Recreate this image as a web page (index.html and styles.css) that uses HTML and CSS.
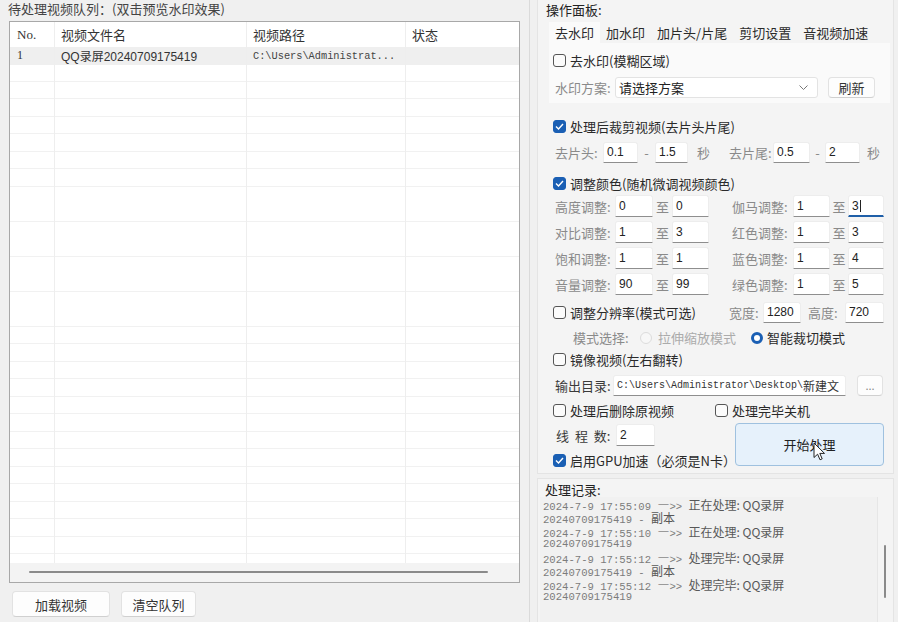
FILE: index.html
```html
<!doctype html>
<html lang="zh-CN">
<head>
    <meta charset="UTF-8">
    <meta name="viewport" content="width=device-width, initial-scale=1.0">
    <title>视频批量处理</title>
    <link rel="stylesheet" href="styles.css">
</head>
<body>
<div class="app">
    <!-- 左侧：待处理队列 -->
    <section class="queue">
        <div class="queue-title">待处理视频队列：(双击预览水印效果)</div>
        <div class="grid-box">
            <div class="grid">
                <div class="col col-no">
                    <div class="th">No.</div>
                    <div class="td sel">1</div>
                </div>
                <div class="col col-name">
                    <div class="th">视频文件名</div>
                    <div class="td sel">QQ录屏20240709175419</div>
                </div>
                <div class="col col-path">
                    <div class="th">视频路径</div>
                    <div class="td sel mono">C:\Users\Administrat...</div>
                </div>
                <div class="col col-state">
                    <div class="th">状态</div>
                    <div class="td sel"></div>
                </div>
            </div>
            <div class="hscroll"><div class="hthumb"></div></div>
        </div>
        <div class="queue-actions">
            <button class="btn btn-load">加载视频</button>
            <button class="btn btn-clear">清空队列</button>
        </div>
    </section>

    <!-- 右侧：操作面板 + 处理记录 -->
    <section class="side">
        <div class="ops">
            <div class="ops-title">操作面板:</div>
            <div class="tabs">
                <div class="tab active">去水印</div>
                <div class="tab">加水印</div>
                <div class="tab">加片头/片尾</div>
                <div class="tab">剪切设置</div>
                <div class="tab">音视频加速</div>
            </div>
            <div class="tabpage">
                <label class="check"><span class="box"></span>去水印(模糊区域)</label>
                <div class="scheme-row">
                    <span class="lbl scheme-lbl">水印方案:</span>
                    <div class="select">
                        <span>请选择方案</span>
                        <svg class="chevron" width="9" height="5" viewBox="0 0 9 5"><polyline points="0.5,0.5 4.5,4.5 8.5,0.5" fill="none" stroke="#777" stroke-width="1"/></svg>
                    </div>
                    <button class="btn btn-refresh">刷新</button>
                </div>
            </div>

            <div class="form">
                <label class="check row row-crop-cb"><span class="box on"><svg width="9" height="7" viewBox="0 0 9 7"><polyline points="1,3.5 3.5,6 8,1" fill="none" stroke="#fff" stroke-width="1.4"/></svg></span>处理后裁剪视频(去片头片尾)</label>

                <div class="row crop-row">
                    <span class="lbl">去片头:</span>
                    <span class="field">0.1</span>
                    <span class="lbl dash">-</span>
                    <span class="field">1.5</span>
                    <span class="lbl sec">秒</span>
                    <span class="lbl">去片尾:</span>
                    <span class="field">0.5</span>
                    <span class="lbl dash">-</span>
                    <span class="field">2</span>
                    <span class="lbl sec2">秒</span>
                </div>

                <label class="check row row-color-cb"><span class="box on"><svg width="9" height="7" viewBox="0 0 9 7"><polyline points="1,3.5 3.5,6 8,1" fill="none" stroke="#fff" stroke-width="1.4"/></svg></span>调整颜色(随机微调视频颜色)</label>

                <div class="row color-row first">
                    <span class="lbl">高度调整:</span><span class="field">0</span><span class="lbl to">至</span><span class="field">0</span><span></span>
                    <span class="lbl">伽马调整:</span><span class="field">1</span><span class="lbl to">至</span><span class="field focus">3<i class="caret"></i></span>
                </div>
                <div class="row color-row">
                    <span class="lbl">对比调整:</span><span class="field">1</span><span class="lbl to">至</span><span class="field">3</span><span></span>
                    <span class="lbl">红色调整:</span><span class="field">1</span><span class="lbl to">至</span><span class="field">3</span>
                </div>
                <div class="row color-row">
                    <span class="lbl">饱和调整:</span><span class="field">1</span><span class="lbl to">至</span><span class="field">1</span><span></span>
                    <span class="lbl">蓝色调整:</span><span class="field">1</span><span class="lbl to">至</span><span class="field">4</span>
                </div>
                <div class="row color-row">
                    <span class="lbl">音量调整:</span><span class="field">90</span><span class="lbl to">至</span><span class="field">99</span><span></span>
                    <span class="lbl">绿色调整:</span><span class="field">1</span><span class="lbl to">至</span><span class="field">5</span>
                </div>

                <div class="row res-row">
                    <label class="check"><span class="box"></span>调整分辨率(模式可选)</label>
                    <span class="lbl">宽度:</span><span class="field">1280</span><span></span>
                    <span class="lbl">高度:</span><span class="field">720</span>
                </div>

                <div class="row mode-row">
                    <span class="lbl">模式选择:</span>
                    <span class="radio off"></span><span class="lbl disabled">拉伸缩放模式</span>
                    <span class="radio on"></span><span class="radio-text">智能裁切模式</span>
                </div>

                <label class="check row row-mirror"><span class="box"></span>镜像视频(左右翻转)</label>

                <div class="row out-row">
                    <span class="lbl dark out-lbl">输出目录:</span>
                    <span class="field path"><span class="mono">C:\Users\Administrator\Desktop\</span>新建文</span>
                    <button class="btn btn-browse">...</button>
                </div>

                <div class="row del-row">
                    <label class="check"><span class="box"></span>处理后删除原视频</label>
                    <label class="check"><span class="box"></span>处理完毕关机</label>
                </div>

                <div class="run-block">
                    <div class="run-left">
                        <div class="row threads-row">
                            <span class="lbl dark threads-lbl">线&nbsp;程&nbsp;数:</span>
                            <span class="field">2</span>
                        </div>
                        <label class="check row row-gpu"><span class="box on"><svg width="9" height="7" viewBox="0 0 9 7"><polyline points="1,3.5 3.5,6 8,1" fill="none" stroke="#fff" stroke-width="1.4"/></svg></span>启用GPU加速（必须是N卡）</label>
                    </div>
                    <button class="btn btn-start">开始处理
                        <svg class="cursor" width="13" height="20" viewBox="0 0 13 20"><path d="M1 1 L1 15.5 L4.6 12.2 L7 17.8 L9.2 16.8 L6.8 11.4 L11.5 11.4 Z" fill="#fff" stroke="#222" stroke-width="1"/></svg>
                    </button>
                </div>
            </div>
        </div>

        <div class="log">
            <div class="log-title">处理记录:</div>
            <div class="log-box">
                <div class="log-lines">
                    <div class="log-line">2024-7-9 17:55:09 <span class="cn">—</span>&gt;&gt; <span class="cn">正在处理: QQ录屏</span></div>
                    <div class="log-line">20240709175419 - <span class="cn">副本</span></div>
                    <div class="log-line">2024-7-9 17:55:10 <span class="cn">—</span>&gt;&gt; <span class="cn">正在处理: QQ录屏</span></div>
                    <div class="log-line">20240709175419</div>
                    <div class="log-line">2024-7-9 17:55:12 <span class="cn">—</span>&gt;&gt; <span class="cn">处理完毕: QQ录屏</span></div>
                    <div class="log-line">20240709175419 - <span class="cn">副本</span></div>
                    <div class="log-line">2024-7-9 17:55:12 <span class="cn">—</span>&gt;&gt; <span class="cn">处理完毕: QQ录屏</span></div>
                    <div class="log-line">20240709175419</div>
                </div>
                <div class="log-track"><div class="vthumb"></div></div>
            </div>
        </div>
    </section>
</div>
</body>
</html>
```

FILE: styles.css
```css
body {
    margin: 0;
    background-color: #f0f0f0;
    font: 13px/1 "Noto Sans CJK SC", "Liberation Sans", sans-serif;
    color: #333;
    overflow: hidden;
}

.app {
    display: flex;
    width: 898px;
    height: 622px;
}

.mono {
    font-family: "Liberation Mono", "Noto Sans CJK SC", monospace;
}

/* ---------- 队列 ---------- */

.queue {
    width: 530px;
    flex: none;
    box-sizing: border-box;
    border-right: 1px solid #dadada;
}

.queue-title {
    height: 21px;
    box-sizing: border-box;
    padding: 2px 0 0 8px;
    line-height: 14px;
    color: #444;
}

.grid-box {
    margin-left: 9px;
    width: 511px;
    height: 562px;
    box-sizing: border-box;
    border: 1px solid #a8a8a8;
    background-color: #fff;
    display: flex;
    flex-direction: column;
}

.grid {
    flex: 1;
    display: flex;
    overflow: hidden;
}

.col {
    box-sizing: border-box;
    border-right: 1px solid #eeeeee;
    background-image: repeating-linear-gradient(to bottom, #fff 0, #fff 16.5px, #f1f1f1 16.5px, #f1f1f1 17.5px);
    background-position: 0 25px;
}

.col-no { width: 45px; }
.col-name { width: 192px; }
.col-path { width: 159px; }
.col-state { flex: 1; border-right: none; }

.th {
    height: 25px;
    padding-left: 6px;
    display: flex;
    align-items: center;
    background-color: #fff;
    color: #333;
}

.td {
    height: 17.5px;
    padding-left: 6px;
    display: flex;
    align-items: center;
    font: 12px "Liberation Sans", "Noto Sans CJK SC", sans-serif;
    color: #333;
}

.td.mono {
    font: 10.3px "Liberation Mono", monospace;
    color: #444;
}

.col-no .th,
.col-no .td {
    padding-left: 7px;
    font-family: "Liberation Serif", serif;
}

.td.sel {
    background-color: #efefef;
}

.hscroll {
    height: 19px;
    background-color: #f3f3f3;
    overflow: hidden;
}

.hthumb {
    margin: 8px 0 0 19px;
    width: 459px;
    height: 2px;
    border-radius: 1px;
    background-color: #8a8a8a;
}

.queue-actions {
    display: flex;
    gap: 11px;
    padding: 8px 0 0 12px;
}

.btn {
    height: 26px;
    padding: 0;
    border: 1px solid #e2e2e2;
    border-bottom-color: #d0d0d0;
    border-radius: 4px;
    background-color: #fdfdfd;
    font: 13px "Noto Sans CJK SC", sans-serif;
    color: #333;
}

.btn-load { width: 98px; }
.btn-clear { width: 75px; }

/* ---------- 操作面板 ---------- */

.side {
    flex: 1;
    display: flex;
    flex-direction: column;
    gap: 4px;
    padding: 0 5px 0 7px;
}

.ops {
    height: 474px;
    flex: none;
    box-sizing: border-box;
    background-color: #f4f4f4;
    border: 1px solid #e4e4e4;
    border-top: none;
}

.ops-title {
    height: 18px;
    box-sizing: border-box;
    padding: 3px 0 0 8px;
    line-height: 13px;
    color: #222;
}

.tabs {
    display: flex;
    height: 21px;
    margin: 4px 0 0 11px;
}

.tab {
    padding: 0 6px;
    line-height: 21px;
    color: #2a2a2a;
}

.tab.active {
    background-color: #fafafa;
}

.tabpage {
    margin-left: 11px;
    width: 341px;
    height: 60px;
    box-sizing: border-box;
    padding: 6px 0 0 4px;
    background-color: #fafafa;
    display: flex;
    flex-direction: column;
    gap: 5px;
}

.tabpage .check {
    height: 22px;
}

.check {
    display: flex;
    align-items: center;
    gap: 4px;
    color: #2a2a2a;
}

.box {
    width: 13px;
    height: 13px;
    flex: none;
    box-sizing: border-box;
    border: 1px solid #555;
    border-radius: 3px;
    background-color: #fbfbfb;
    display: flex;
    align-items: center;
    justify-content: center;
}

.box.on {
    background-color: #1a5fb4;
    border-color: #1a5fb4;
}

.lbl {
    color: #8a8a8a;
    white-space: nowrap;
}

.lbl.dark {
    color: #3a3a3a;
}

.scheme-row {
    display: flex;
    align-items: center;
    height: 22px;
    padding-left: 2px;
}

.scheme-lbl {
    width: 60px;
}

.select {
    width: 203px;
    height: 21px;
    box-sizing: border-box;
    border: 1px solid #e3e3e3;
    border-radius: 3px;
    background-color: #fff;
    display: flex;
    align-items: center;
    justify-content: space-between;
    padding: 0 9px 0 3px;
    color: #222;
}

.btn-refresh {
    width: 47px;
    height: 21px;
    margin-left: 10px;
}

.form {
    padding-left: 15px;
    display: flex;
    flex-direction: column;
}

.row {
    height: 22px;
    margin-top: 4px;
    flex: none;
}

.row-crop-cb { margin-top: 12px; }
.row-color-cb { margin-top: 9px; }
.color-row.first { margin-top: 1px; }
.res-row { margin-top: 6px; }
.mode-row { height: 21px; }
.row-mirror { margin-top: 0; }
.del-row,
.run-block { margin-top: 3px; }

.field {
    height: 21px;
    box-sizing: border-box;
    padding-left: 3px;
    border: 1px solid #ededed;
    border-bottom-color: #8e8e8e;
    border-radius: 3px 3px 0 0;
    background-color: #fff;
    display: flex;
    align-items: center;
    font: 12px "Liberation Sans", "Noto Sans CJK SC", sans-serif;
    color: #222;
    white-space: nowrap;
    overflow: hidden;
}

.field.focus {
    border-bottom: 2px solid #1f5fa8;
}

.caret {
    width: 1px;
    height: 12px;
    margin-left: 1px;
    background-color: #222;
}

.crop-row {
    display: grid;
    grid-template-columns: 48px 35px 17px 33px 41px 44px 37px 15px 35px auto;
    align-items: center;
    padding-left: 2px;
}

.crop-row .dash {
    text-align: center;
}

.crop-row .sec {
    padding-left: 9px;
}

.crop-row .sec2 {
    padding-left: 7px;
}

.color-row {
    display: grid;
    grid-template-columns: 60px 38px 19px 37px 23px 61px 37px 18px 36px;
    align-items: center;
    padding-left: 2px;
}

.color-row .field {
    height: 22px;
}

.color-row .to {
    text-align: center;
}

.res-row {
    display: grid;
    grid-template-columns: 176px 34px 38px 7px 37px 39px;
    align-items: center;
}

.mode-row {
    display: flex;
    align-items: center;
    padding-left: 20px;
}

.mode-row > .lbl:first-child {
    width: 67px;
}

.radio {
    width: 12px;
    height: 12px;
    flex: none;
    box-sizing: border-box;
    border-radius: 50%;
}

.radio.off {
    border: 1px solid #dcdcdc;
    background-color: #f7f7f7;
    margin-right: 6px;
}

.radio.on {
    border: 3.5px solid #1a5fb4;
    background-color: #fff;
    margin: 0 4px 0 15px;
}

.lbl.disabled {
    color: #ababab;
}

.radio-text {
    color: #2a2a2a;
}

.check.row {
    display: flex;
}

.out-row {
    display: flex;
    align-items: center;
    padding-left: 2px;
}

.out-lbl {
    width: 58px;
}

.field.path {
    width: 233px;
    font-size: 12px;
    color: #333;
}

.field.path .mono {
    font-size: 10px;
}

.btn-browse {
    width: 26px;
    height: 21px;
    margin-left: 11px;
    font-size: 11px;
    color: #888;
}

.del-row {
    display: grid;
    grid-template-columns: 162px auto;
    align-items: center;
}

.run-block {
    display: flex;
    flex: none;
}

.run-left {
    width: 182px;
    display: flex;
    flex-direction: column;
}

.run-left .row {
    margin-top: 0;
}

.run-left .row-gpu {
    margin-top: 3px;
}

.threads-row {
    display: flex;
    align-items: center;
    padding-left: 3px;
}

.threads-lbl {
    width: 60px;
    word-spacing: 3px;
}

.threads-row .field {
    width: 39px;
    height: 22px;
}

.btn-start {
    position: relative;
    width: 149px;
    height: 43px;
    margin-top: -1px;
    border: 1px solid #9fc1df;
    background-color: #e6f1fb;
    color: #222;
}

.cursor {
    position: absolute;
    left: 77px;
    top: 18px;
}

/* ---------- 处理记录 ---------- */

.log {
    flex: 1;
    background-color: #f4f4f4;
    border: 1px solid #e4e4e4;
    border-bottom: none;
}

.log-title {
    height: 18px;
    box-sizing: border-box;
    padding: 4px 0 0 7px;
    line-height: 13px;
    color: #222;
}

.log-box {
    display: flex;
    height: 126px;
    margin-left: 2px;
}

.log-lines {
    width: 337px;
    box-sizing: border-box;
    padding: 1px 0 0 3px;
    background-color: #f1f1f1;
    font: 10.6px/13.3px "Liberation Mono", monospace;
    color: #7c7c7c;
}

.log-line {
    height: 13.3px;
    white-space: nowrap;
}

.log-line .cn {
    font: 12px/13.3px "Noto Sans CJK SC", sans-serif;
    color: #585858;
}

.log-track {
    width: 15px;
    border-left: 1px solid #e6e6e6;
}

.vthumb {
    width: 2px;
    height: 53px;
    margin: 48px 0 0 6px;
    border-radius: 1px;
    background-color: #8a8a8a;
}
```
